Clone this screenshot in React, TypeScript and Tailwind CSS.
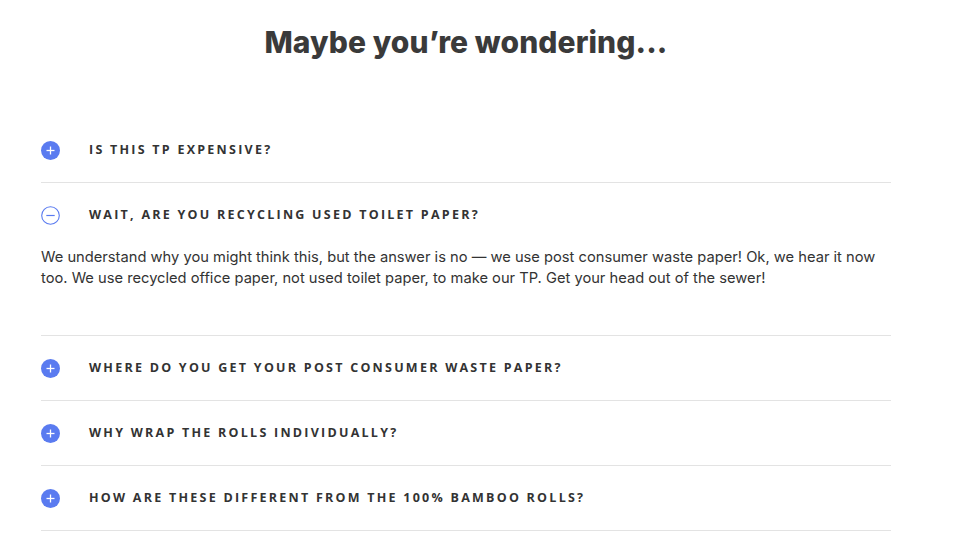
import { useState } from 'react';

const faqs = [
    { q: 'Is this TP expensive?', a: '' },
    {
        q: 'Wait, are you recycling used toilet paper?',
        a: 'We understand why you might think this, but the answer is no \u2014 we use post consumer waste paper! Ok, we hear it now too. We use recycled office paper, not used toilet paper, to make our TP. Get your head out of the sewer!',
    },
    { q: 'Where do you get your post consumer waste paper?', a: '' },
    { q: 'Why wrap the rolls individually?', a: '' },
    { q: 'How are these different from the 100% bamboo rolls?', a: '' },
];

function PlusIcon({ open }: { open: boolean }) {
    if (open) {
        return (
            <svg width="19" height="19" viewBox="0 0 19 19" className="shrink-0">
                <circle cx="9.5" cy="9.5" r="8.8" fill="none" stroke="#5a7bf0" strokeWidth="1.1" />
                <line x1="5.3" y1="9.5" x2="13.7" y2="9.5" stroke="#5a7bf0" strokeWidth="1.2" />
            </svg>
        );
    }
    return (
        <svg width="19" height="19" viewBox="0 0 19 19" className="shrink-0">
            <circle cx="9.5" cy="9.5" r="9.5" fill="#5a7bf0" />
            <line x1="5.5" y1="9.5" x2="13.5" y2="9.5" stroke="#fff" strokeWidth="1.3" />
            <line x1="9.5" y1="5.5" x2="9.5" y2="13.5" stroke="#fff" strokeWidth="1.3" />
        </svg>
    );
}

export default function App() {
    const [open, setOpen] = useState<number | null>(1);

    return (
        <div className="min-h-[555px] bg-white font-['Inter',sans-serif] text-[#333]">
            <div className="ml-[41px] w-[850px] pt-[20px]">
                <h1 className="text-center text-[30px] font-extrabold leading-[44px] tracking-[0.1px] text-[#3a3a3a]">
                    Maybe you’re wondering...
                </h1>

                <div className="mt-[54px]">
                    {faqs.map((f, idx) => {
                        const isOpen = open === idx;
                        return (
                            <div key={idx} className={idx === 0 ? '' : 'border-t border-[#e3e3e3]'}>
                                <button
                                    onClick={() => setOpen(isOpen ? null : idx)}
                                    className="flex h-[64px] w-full items-center text-left"
                                >
                                    <span className="w-[48px] pt-[1px]">
                                        <PlusIcon open={isOpen} />
                                    </span>
                                    <span className="font-['Open_Sans',sans-serif] text-[12.5px] font-bold uppercase tracking-[0.18em] text-[#333]">
                                        {f.q}
                                    </span>
                                </button>
                                {isOpen && f.a && (
                                    <p className="pb-[46px] text-[14.7px] leading-[21px] text-[#333]">
                                        {f.a}
                                    </p>
                                )}
                            </div>
                        );
                    })}
                    <div className="border-t border-[#e3e3e3]" />
                </div>
            </div>
        </div>
    );
}
